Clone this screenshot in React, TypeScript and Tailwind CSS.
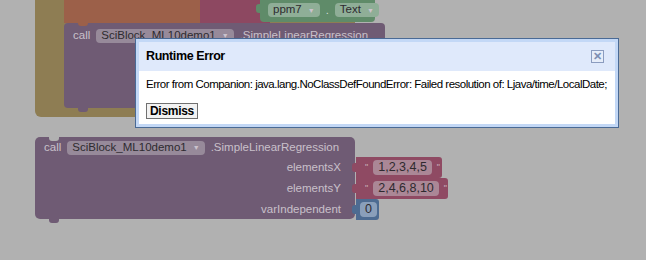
import React from 'react'

const blockFont = { fontFamily: '"Liberation Sans", Arial, sans-serif' }

const Field: React.FC<{ children: React.ReactNode; className?: string; arrow?: boolean }> = ({ children, className = '', arrow }) => (
  <span className={`inline-flex h-[14px] items-center rounded-[4px] px-[5px] text-[11.5px] leading-none text-[#2e2a2f] ${className}`}>
    {children}
    {arrow && <span className="ml-[6px] text-[7px] text-[#cbc2cd]">▼</span>}
  </span>
)

const Tab: React.FC<{ color: string }> = ({ color }) => (
  <span className={`absolute left-[-4px] top-[6px] h-[9px] w-[5px] rounded-l-[3px] ${color}`} />
)

export default function App() {
  return (
    <div className="relative h-[260px] w-[646px] overflow-hidden bg-[#b1b1b1]" style={blockFont}>
      {/* olive outer block */}
      <div className="absolute left-[35px] top-[-20px] h-[137px] w-[320px] rounded-b-[6px] bg-[#8e7d53]" />
      {/* statements above the call */}
      <div className="absolute left-[64px] top-0 flex h-[23px]">
        <div className="w-[136px] bg-[#9c6049]" />
        <div className="w-[70px] bg-[#8d4861]" />
        <div className="relative -ml-[10px] -mt-[2px] flex h-[24px] w-[115px] items-center gap-[6px] rounded-b-[4px] bg-[#5f8b69] pl-[8px]">
          <Tab color="bg-[#5f8b69]" />
          <Field className="bg-[#8fae97]" arrow>ppm7</Field>
          <span className="text-[11px] text-[#d6dcd6]">.</span>
          <Field className="bg-[#8fae97]" arrow>Text</Field>
        </div>
      </div>

      {/* top call block */}
      <div className="absolute left-[64px] top-[23px] h-[85px] w-[321px] rounded-[4px] bg-[#6f5b74]">
        <span className="absolute left-[14px] top-[-1px] h-[4px] w-[10px] rounded-b-[3px] bg-[#9c6049]" />
        <div className="flex items-center gap-[6px] pl-[9px] pt-[4px]">
          <span className="text-[11.5px] text-[#c9c0ca]">call</span>
          <Field className="bg-[#978a9a]" arrow>SciBlock_ML10demo1</Field>
          <span className="text-[11.5px] text-[#c9c0ca]">.SimpleLinearRegression</span>
        </div>
        <span className="absolute bottom-[-4px] left-[14px] h-[5px] w-[10px] rounded-b-[3px] bg-[#6f5b74]" />
      </div>

      {/* bottom call block with its inputs */}
      <div className="absolute left-[35px] top-[137px] flex items-start">
        <div className="relative h-[82px] w-[320px] rounded-[5px] bg-[#6f5b74] text-[11.5px] text-[#c9c0ca]">
          <span className="absolute left-[14px] top-0 h-[4px] w-[10px] rounded-b-[3px] bg-[#b1b1b1]" />
          <div className="flex h-[20px] items-center gap-[6px] pl-[9px] pt-[1px]">
            <span>call</span>
            <Field className="bg-[#978a9a]" arrow>SciBlock_ML10demo1</Field>
            <span>.SimpleLinearRegression</span>
          </div>
          <div className="flex flex-col items-end pr-[14px]">
            <div className="flex h-[21px] items-center">elementsX</div>
            <div className="flex h-[21px] items-center">elementsY</div>
            <div className="flex h-[21px] items-center">varIndependent</div>
          </div>
          <span className="absolute bottom-[-4px] left-[14px] h-[5px] w-[10px] rounded-b-[3px] bg-[#6f5b74]" />
        </div>
        <div className="ml-[1px] flex flex-col items-start pt-[20px] text-[#c9b2bb]">
          <div className="relative flex h-[21px] w-[86px] items-center gap-[5px] rounded-r-[3px] bg-[#8f4a63] pl-[9px]">
            <Tab color="bg-[#8f4a63]" />
            <span className="text-[9px]">"</span>
            <Field className="h-[15px] bg-[#ab8796] text-[12.5px]">1,2,3,4,5</Field>
            <span className="text-[9px]">"</span>
          </div>
          <div className="relative flex h-[21px] w-[92px] items-center gap-[5px] rounded-r-[3px] bg-[#8f4a63] pl-[9px]">
            <Tab color="bg-[#8f4a63]" />
            <span className="text-[9px]">"</span>
            <Field className="h-[15px] bg-[#ab8796] text-[12.5px]">2,4,6,8,10</Field>
            <span className="text-[9px]">"</span>
          </div>
          <div className="relative flex h-[21px] w-[23px] items-center rounded-r-[3px] bg-[#4d6b91] pl-[4px]">
            <Tab color="bg-[#4d6b91]" />
            <Field className="h-[15px] bg-[#8a9fba] px-[4px] text-[12.5px]">0</Field>
          </div>
        </div>
      </div>

      {/* dialog */}
      <div className="absolute left-[135px] top-[38px] w-[484px] border border-[#4a6a95] bg-[#c3d8f6] p-[3px]">
        <div className="flex h-[29px] items-center justify-between bg-[#dfe9fb] pl-[7px] pr-[11px]">
          <span className="text-[12.5px] font-bold tracking-[-0.4px] text-black">Runtime Error</span>
          <span className="flex h-[13px] w-[13px] items-center justify-center border border-[#8b9cbf] bg-[#e6edf9] text-[11px] font-bold leading-none text-[#7d8fb3]">
            ✕
          </span>
        </div>
        <div className="h-[53px] bg-white px-[7px] pt-[6px]">
          <p className="whitespace-nowrap text-[11.5px] leading-[14px] tracking-[-0.5px] text-black">
            Error from Companion: java.lang.NoClassDefFoundError: Failed resolution of: Ljava/time/LocalDate;
          </p>
          <button className="mt-[12px] flex h-[16px] items-center border border-[#707070] bg-[#f2f2f2] px-[3px] text-[12px] font-bold leading-none tracking-[-0.3px] text-black">
            Dismiss
          </button>
        </div>
      </div>
    </div>
  )
}
